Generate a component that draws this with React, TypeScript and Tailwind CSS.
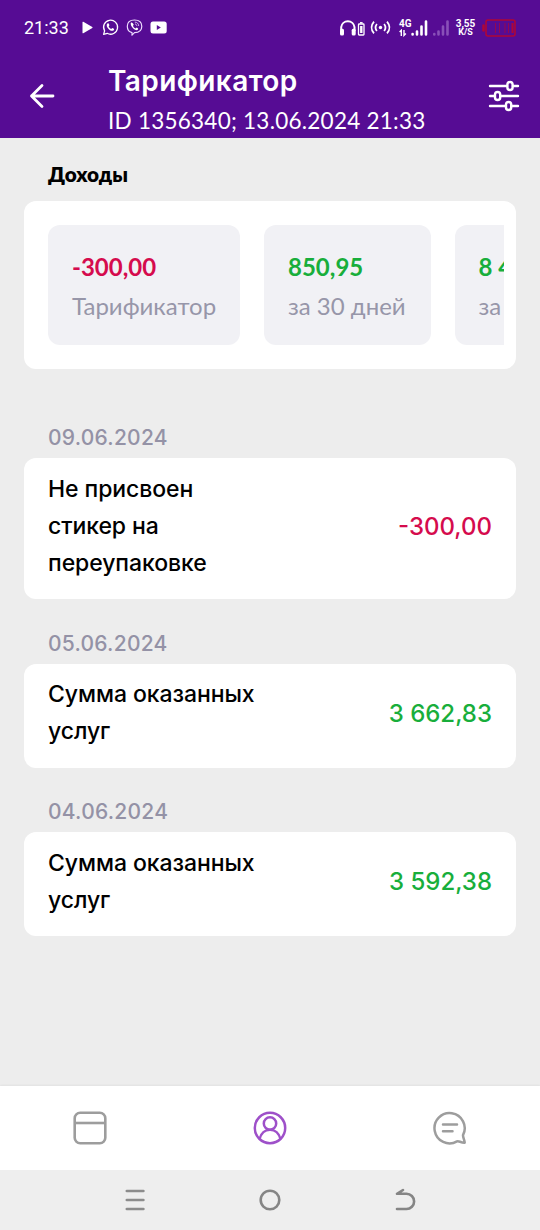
import React from "react";

type Tone = "neg" | "pos";

const stats: { value: string; label: string; tone: Tone; width: string }[] = [
  { value: "-300,00", label: "Тарификатор", tone: "neg", width: "w-48" },
  { value: "850,95", label: "за 30 дней", tone: "pos", width: "w-[166.5px]" },
  { value: "8 4", label: "за", tone: "pos", width: "w-[49px]" },
];

const entries: { date: string; lines: string[]; amount: string; tone: Tone; height: string; offset: string }[] = [
  { date: "09.06.2024", lines: ["Не присвоен", "стикер на", "переупаковке"], amount: "-300,00", tone: "neg", height: "h-[141px]", offset: "pt-12" },
  { date: "05.06.2024", lines: ["Сумма оказанных", "услуг"], amount: "3 662,83", tone: "pos", height: "h-[104px]", offset: "pt-[23.5px]" },
  { date: "04.06.2024", lines: ["Сумма оказанных", "услуг"], amount: "3 592,38", tone: "pos", height: "h-[104px]", offset: "pt-[23.5px]" },
];

function StatusBar() {
  return (
    <div className="flex h-[55px] items-center justify-between pl-6 pr-[22px] text-white">
      <div className="flex items-center">
        <span className="w-[58px] font-[Roboto,sans-serif] text-[18px] leading-none">21:33</span>
        <svg width="87" height="20" viewBox="82 17.500 87 20" fill="none">
          <path d="M82.5 21.7v10.6q0 .8.8.4l9-5.2q.6-.5 0-1l-9-5.2q-.8-.4-.8.4Z" fill="#fff" />
          <path d="M103.6 33.9l1-3.6a7 7 0 1 1 2.6 2.5Z" stroke="#fff" strokeWidth="1.3" strokeLinejoin="round" />
          <path d="M107.4 23.1c.5-.5 1.2-.4 1.5.2l.5 1.4-.7 1.2c.5 1.2 1.3 2 2.5 2.5l1-.9 1.7.8c.4.4.2 1.2-.4 1.6-1.2.9-3.1.3-4.7-1.2-1.9-1.8-2.9-4-1.4-5.6Z" fill="#fff" />
          <path d="M132 32.1c-3.700-.7-4.700-2.500-4.700-6.300 0-4.500 2-6.300 7.200-6.300s7.300 1.800 7.300 6.200c0 4.600-2.200 6.300-7.300 6.400l-2.500 2.600Z" stroke="#eddcff" strokeWidth="1.2" strokeLinejoin="round" />
          <path d="M131 22.300c-1 1.300.8 4.500 2.500 5.900 1.500 1.300 3.500 2 4.400.9.600-.8.200-1.300-1.300-2l-1 .8c-1.300-.4-2.200-1.400-2.600-2.700l.7-.9c-.7-1.600-1.800-2.700-2.700-2Z" fill="#fff" />
          <path d="M134.800 21.600c2.400.1 3.800 1.500 3.900 3.900M135 23.500c1.200.1 1.700.8 1.800 1.900" stroke="#eddcff" strokeWidth=".8" />
          <rect x="150.500" y="21" width="16.200" height="12" rx="2.500" fill="#fff" />
          <path d="M156.800 24.500v5l4-2.500Z" fill="#560c94" />
        </svg>
      </div>
      <div className="flex items-center">
        <svg width="58" height="24" viewBox="338 15.500 58 24" fill="none" stroke="#fff">
          <path d="M341.200 30v-3.300a6.700 6.700 0 0 1 13.300 0V30" strokeWidth="2" />
          <rect x="340" y="28.300" width="4" height="6.700" rx="1.500" fill="#fff" stroke="none" />
          <rect x="351.700" y="28.300" width="4" height="6.700" rx="1.500" fill="#fff" stroke="none" />
          <rect x="358.500" y="23.500" width="5.500" height="11" rx=".7" strokeWidth="1.300" />
          <path d="M360 22.300h2.600" strokeWidth="1.500" />
          <path d="M361.300 25.500v7" strokeWidth="2.400" />
          <circle cx="380.500" cy="27" r="1.700" fill="#fff" stroke="none" />
          <path d="M376.900 23.500q-2.700 3.500 0 7M374 21.100q-5 5.900 0 11.800M384.100 23.500q2.700 3.500 0 7M387 21.100q5 5.900 0 11.800" strokeWidth="1.700" />
        </svg>
        <div className="flex h-[20px] w-[14px] flex-col items-start pl-[3px]">
          <span className="font-[Roboto,sans-serif] text-[10px] font-bold leading-[11px]">4G</span>
          <svg width="8" height="8" viewBox="0 0 8 7" fill="none" stroke="#fff" strokeWidth="1.400"><path d="M.6 2.500 2.300.8v5.700M5 .4v5.500L6.900 4" /></svg>
        </div>
        <svg width="43" height="20" viewBox="410 17 43 20" fill="none" strokeWidth="2.600" strokeLinecap="round">
          <path d="M412.600 33v.4M417 30.500v3M421.500 25.500v8M426 20.500v13" stroke="#fff" />
          <path d="M434.300 33v.4M438.500 30.500v3M443 25.500v8M447.500 20.500v13" stroke="#8950b8" />
        </svg>
        <div className="mr-1 flex h-[18px] w-[25px] flex-col items-center font-[Roboto,sans-serif] text-[10px] font-bold leading-[9px]">
          <span>3,55</span><span className="text-[9px]">K/S</span>
        </div>
        <svg width="36" height="22" viewBox="482 16 36 22" fill="none" stroke="#b00636">
          <rect x="486" y="19" width="29" height="16" rx="2" strokeWidth="1.600" />
          <path d="M483.500 24.500v5" strokeWidth="2.500" strokeLinecap="round" />
          <path d="M495.500 22v10M499.500 22v10M505 22v10M508.500 22v10" strokeWidth="1" opacity=".7" />
          <path d="M512.500 22v10" strokeWidth="2" />
        </svg>
      </div>
    </div>
  );
}

function Header() {
  return (
    <header className="h-[138px] shrink-0 bg-[#560c94] text-white">
      <StatusBar />
      <div className="flex h-[83px] justify-between pl-[29px] pr-5">
        <div className="flex">
          <svg className="mt-7" width="27" height="27" viewBox="29 83 27 27" fill="none" stroke="#fff" strokeWidth="2.800" strokeLinecap="round" strokeLinejoin="round">
            <path d="M53 96H31.500M42 85.500 31.500 96 42 106.500" />
          </svg>
          <div className="ml-[52px] whitespace-nowrap pt-2">
            <h1 className="font-[Inter,sans-serif] text-[28px] font-semibold leading-9 tracking-[0.4px]">Тарификатор</h1>
            <p className="mt-2 font-[Lato,sans-serif] text-[22.500px] leading-7 tracking-[0.240px]">ID 1356340; 13.06.2024 21:33</p>
          </div>
        </div>
        <svg className="mt-[25px]" width="32" height="32" viewBox="488 80 32 32" fill="none" stroke="#fff" strokeWidth="2.400" strokeLinecap="round">
          <path d="M490 86h17M513 86h5M490 96h4.500M500.500 96H518M490 106h15.500M512 106h6" />
          <rect x="507.400" y="82" width="5.200" height="8" rx="2.600" />
          <rect x="495" y="92" width="5.200" height="8" rx="2.600" />
          <rect x="506" y="102" width="5.200" height="8" rx="2.600" />
        </svg>
      </div>
    </header>
  );
}

function TabBar() {
  return (
    <nav className="grid h-[84px] shrink-0 grid-cols-3 place-items-center bg-white shadow-[0_-1px_2px_rgba(0,0,0,0.05)]">
      <svg width="36" height="36" viewBox="0 0 36 36" fill="none" stroke="#9d9d9d" strokeWidth="2.600">
        <rect x="2.700" y="2.700" width="30.600" height="30.600" rx="5.500" /><path d="M3 13h30" />
      </svg>
      <svg width="36" height="36" viewBox="0 0 36 36" fill="none" stroke="#9e50c9" strokeWidth="2.500">
        <circle cx="18" cy="18" r="15.200" /><circle cx="18" cy="13.500" r="6.200" /><path d="M7.500 29c1.500-5.700 5.600-9.300 10.500-9.300s9 3.600 10.500 9.300" />
      </svg>
      <svg width="36" height="36" viewBox="0 0 36 36" fill="none" stroke="#9d9d9d" strokeWidth="2.500" strokeLinecap="round" strokeLinejoin="round">
        <path d="M31 25.200A15.100 15.100 0 1 0 25 31.400c2-.8 3.700 1.500 7.700 1.300-.2-2.800-1.600-4.500-1.700-7.500Z" /><path d="M11 14.500h14M11 21.300h9.500" />
      </svg>
    </nav>
  );
}

function SystemBar() {
  return (
    <div className="flex h-[60px] shrink-0 items-center justify-between bg-[#eeeeee] px-[122px]">
      <svg width="26" height="26" viewBox="0 0 26 26" fill="none" stroke="#8c8c8c" strokeWidth="2.600" strokeLinecap="round"><path d="M4.800 4h16.600M4.800 13h16.600M4.800 22h16.600" /></svg>
      <svg width="26" height="26" viewBox="0 0 26 26" fill="none" stroke="#858585" strokeWidth="2.600"><circle cx="13" cy="13" r="9.300" /></svg>
      <svg width="26" height="26" viewBox="0 0 26 26" fill="none" stroke="#858585" strokeWidth="2.600" strokeLinecap="round" strokeLinejoin="round"><path d="M11 3 5 6.800h9.500a7.600 7.600 0 0 1 0 15.200H5" /></svg>
    </div>
  );
}

export default function App() {
  return (
    <div className="flex h-[1230px] w-[540px] flex-col overflow-hidden bg-[#ededed]">
      <Header />
      <main className="flex-1 px-6">
        <h2 className="flex h-[63px] items-center pl-6 pt-[10px] font-[Lato,sans-serif] text-[20.700px] font-extrabold leading-none text-black">Доходы</h2>
        <section className="h-[168px] rounded-xl bg-white py-6 pl-6 pr-3">
          <div className="flex gap-6">
            {stats.map((s, i) => (
              <div key={s.label} className={`h-[120px] shrink-0 whitespace-nowrap bg-[#f1f1f5] pl-6 pt-6 font-[Lato,sans-serif] text-2xl ${i === 2 ? "rounded-l-xl overflow-hidden" : "rounded-xl"} ${s.width}`}>
                <div className={`h-[39px] font-bold leading-9 ${s.tone === "neg" ? "text-[#d50b4d]" : "text-[#18ae3b]"}`}>{s.value}</div>
                <div className="leading-9 text-[#9796a9]">{s.label}</div>
              </div>
            ))}
          </div>
        </section>
        <div>
          {entries.map((e) => (
            <section key={e.date} className={e.offset}>
              <h3 className="flex h-[41px] items-center pl-6 font-[Inter,sans-serif] text-[21px] font-medium leading-none tracking-[0.240px] text-[#9492a6]">{e.date}</h3>
              <div className={`flex items-center justify-between rounded-xl bg-white px-6 font-[Inter,sans-serif] text-[23px] font-medium leading-[37px] text-black ${e.height}`}>
                <div className="whitespace-nowrap pb-[5px] tracking-[-0.080px]">{e.lines.map((l) => <div key={l}>{l}</div>)}</div>
                <div className={`whitespace-nowrap pb-[5px] text-2xl leading-[37px] ${e.tone === "neg" ? "text-[#d50b4d]" : "text-[#18ae3b]"}`}>{e.amount}</div>
              </div>
            </section>
          ))}
        </div>
      </main>
      <TabBar />
      <SystemBar />
    </div>
  );
}
